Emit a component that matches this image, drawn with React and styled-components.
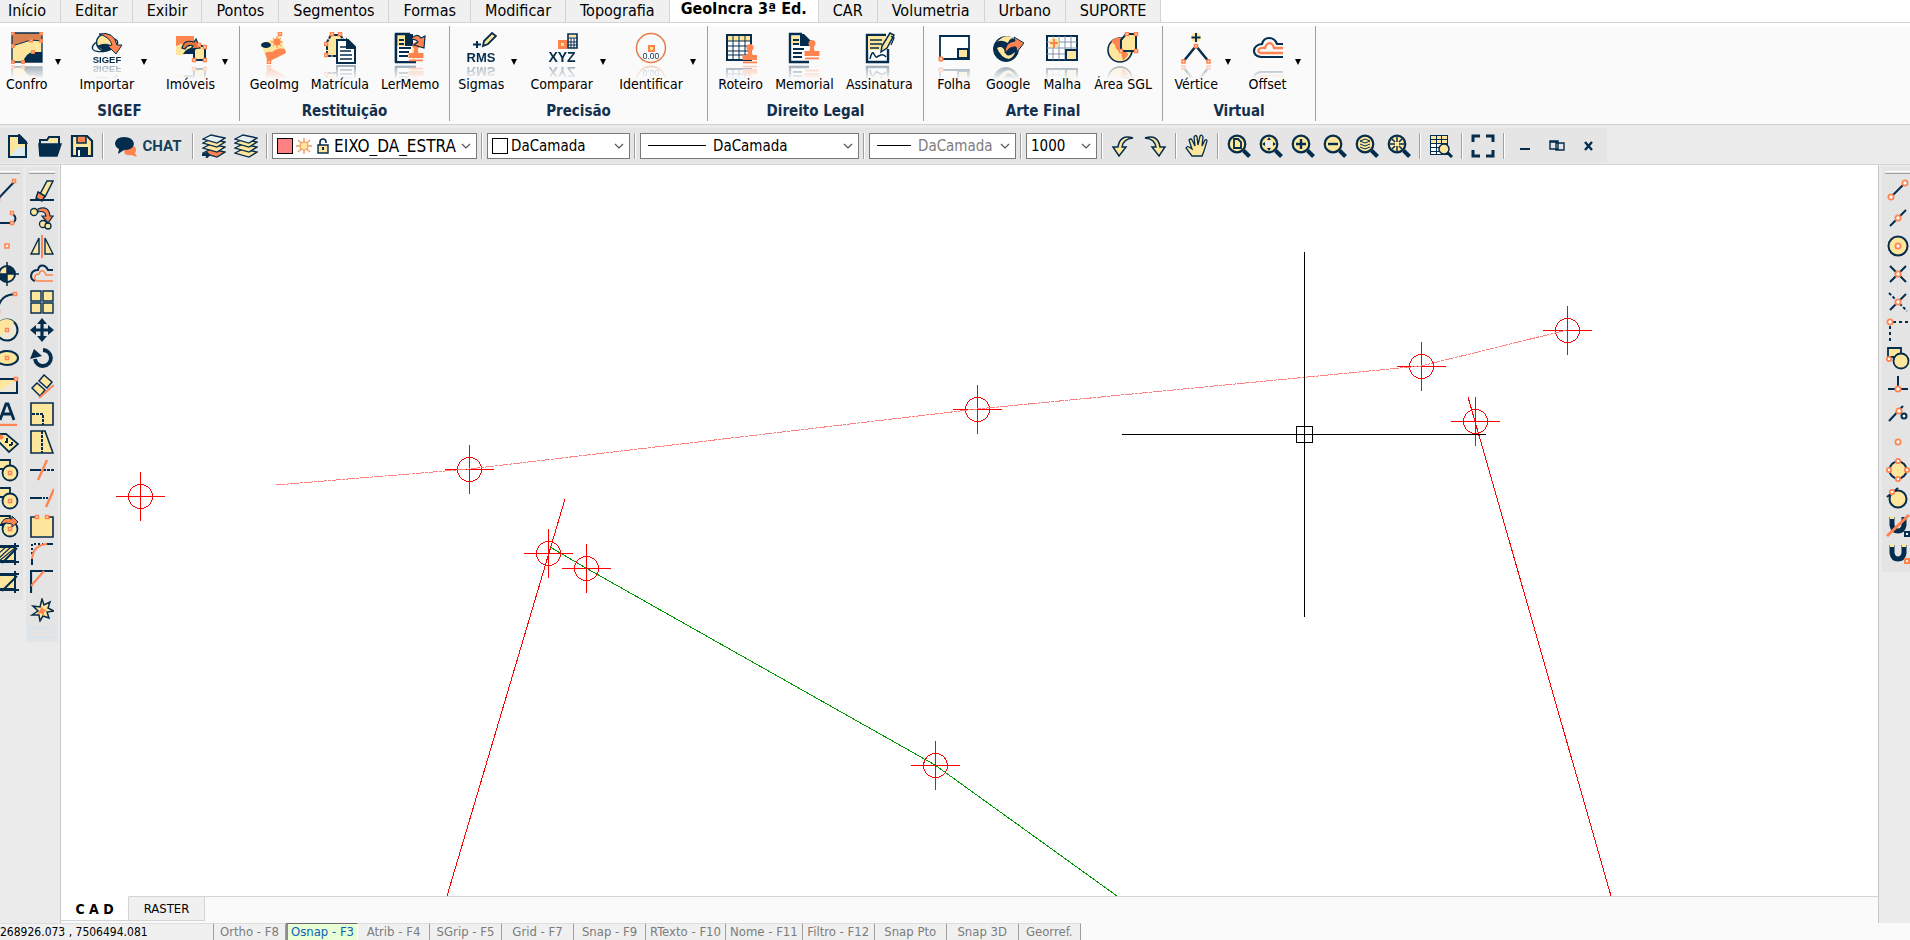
import React from "react";
import styled, { createGlobalStyle, css } from "styled-components";

const NAVY = "#042c4c";
const ORANGE = "#ff8450";
const YELLOW = "#fee79d";
const SANS = '"DejaVu Sans Condensed", "DejaVu Sans", sans-serif';

const GlobalStyle = createGlobalStyle`
  *, *::before { box-sizing: border-box; }
  body { margin: 0; background: #fff; font-family: ${SANS}; color: #000; }
  button, select { font: inherit; color: inherit; margin: 0; }
`;

/* ---------- icon pieces ---------- */

const Svg = styled.svg`
  display: block;
  flex: none;
  width: ${(p) => p.$size}px;
  height: ${(p) => p.$size}px;
  fill: none;
  stroke: ${NAVY};
  stroke-width: 2;
`;

const Sq = ({ x, y, r = 1.5 }) => (
  <rect x={x - r} y={y - r} width={r * 2} height={r * 2} fill="#ffe9d8" stroke={ORANGE} strokeWidth="1.5" />
);
const Dot = ({ x, y, r = 2.6 }) => (
  <circle cx={x} cy={y} r={r} fill="#fff" stroke={ORANGE} strokeWidth="1.8" />
);
const Lens = ({ children }) => (
  <>
    <path d="M16.5 16.5L22.5 22.5" strokeWidth="4" />
    <circle cx="10" cy="10" r="8.3" fill={YELLOW} strokeWidth="2.2" />
    {children}
  </>
);
const Stamp = ({ x, y }) => (
  <g transform={`translate(${x} ${y})`} fill={ORANGE} stroke="none">
    <circle cx="8" cy="3.5" r="3.5" />
    <path d="M6.5 5h3l1 6h5v5h-15v-5h5z" />
    <path d="M1 17.5h14v1.8h-14z" />
  </g>
);
const Caption = ({ x, y, size, weight = 700, children }) => (
  <text x={x} y={y} fontSize={size} fontWeight={weight} fill={NAVY} stroke="none" textAnchor="middle" fontFamily="Liberation Sans, sans-serif">
    {children}
  </text>
);
const Sheets = ({ y, fill }) => <path d={`M1 ${y - 1}l8-4 14 3-8 5z`} fill={fill} strokeWidth="1.3" />;

const RIBBON_ICONS = {
  confro: (
    <>
      <path d="M1 1h30v8L20 8 1 14z" fill="#d9814f" stroke="none" />
      <path d="M1 14L20 8l11 1v11h-9L12 30H1z" fill={YELLOW} stroke="none" />
      <path d="M12 30q3-9 10-10h9v10z" fill={NAVY} stroke="none" />
      <path d="M1 1v29h30V1z" strokeWidth="1.3" />
      <path d="M1 14L20 8l11 1" strokeWidth="1" />
      <Sq x={1.8} y={1.5} r={1.2} /><Sq x={30.2} y={1.5} r={1.2} /><Sq x={1.8} y={14} r={1.2} /><Sq x={20} y={8.5} r={1.2} />
      <Sq x={30.2} y={9} r={1.2} /><Sq x={1.8} y={30} r={1.2} /><Sq x={12} y={30} r={1.2} /><Sq x={22} y={20} r={1.2} />
    </>
  ),
  sigef: (
    <>
      <ellipse cx="14" cy="13" rx="13" ry="6" strokeWidth="1.3" transform="rotate(-15 14 13)" />
      <circle cx="14" cy="10.500" r="8.5" fill={YELLOW} strokeWidth="1.5" />
      <path d="M7 14q8-4 15 1-7 7-15-1z" fill={NAVY} strokeWidth="1" />
      <path d="M8 2q15-3 18 11h5l-6 9-8-8 4-1Q19 5 8 2z" fill={ORANGE} strokeWidth="1" />
      <Caption x={16} y={30.5} size={9.5}>SIGEF</Caption>
    </>
  ),
  imoveis: (
    <>
      <path d="M1 4h18v9q-10-1-18 5z" fill={ORANGE} stroke="none" />
      <path d="M1 14q8-4 16-2v4L9 23H1z" fill={YELLOW} stroke="none" />
      <path d="M8 22q3-6 12-7v7z" fill={NAVY} stroke="none" />
      <path d="M19 28V18l3-4h8v14z" fill={YELLOW} />
      <path d="M7 16q2-9 12-6l2-3 4 9-9 1 2-3q-5-2-8 3z" fill="#e6763c" strokeWidth="1.2" />
      <Sq x={24} y={13} /><Sq x={30} y={15} /><Sq x={30} y={28} /><Sq x={19} y={28} />
    </>
  ),
  geoimg: (
    <>
      <path d="M3 12L22 4l6 17-18 9z" fill={YELLOW} stroke="none" />
      <path d="M7 21q4-2 7-1 6-5 13-3l1 4-18 9z" fill={ORANGE} stroke="none" />
      <ellipse cx="8" cy="13" rx="5" ry="3" fill={NAVY} stroke="none" />
      <circle cx="19" cy="10" r="3.5" fill={ORANGE} stroke="none" />
      <path d="M19 4v12M13 10h12M15 6l8 8M23 6l-8 8" stroke={ORANGE} strokeWidth="1" />
      <Sq x={22} y={2} /><Sq x={11} y={30} />
    </>
  ),
  matricula: (
    <>
      <path d="M3 24V10l4-7h9l4 5v16z" fill={YELLOW} strokeDasharray="5 1" />
      <Sq x={8} y={2} /><Sq x={16} y={2} /><Sq x={2} y={12} /><Sq x={2} y={23} />
      <path d="M13 31V8h11l7 7v16z" fill="#fff" />
      <path d="M23 8v8h8z" fill={NAVY} />
      <path d="M16 15h6M16 19h11M16 23h12M16 27h12" strokeWidth="1.6" />
    </>
  ),
  lermemo: (
    <>
      <path d="M22 30H2V2h14" fill={YELLOW} strokeWidth="2.4" />
      <path d="M2 14h16v15H2z" fill="#fff" stroke="none" />
      <path d="M2 2v28" strokeWidth="2.4" />
      <path d="M11 2h8v12h-8z" fill={NAVY} stroke="none" />
      <path d="M5 8h5M5 12h5M5 16h12M5 20h10M5 24h9" />
      <Stamp x={14} y={10} />
      <path d="M16 8q7-8 11-2l4-2-1 12-10-3 4-3q-3-4-8-2z" fill={ORANGE} strokeWidth="1.2" />
    </>
  ),
  rms: (
    <>
      <path d="M18 14l1-5 8-8 4 3-8 8z" fill={YELLOW} strokeWidth="1.8" />
      <path d="M12 9v7M8 12.500h8" />
      <Caption x={16} y={30} size={13}>RMS</Caption>
    </>
  ),
  xyz: (
    <>
      <path d="M12 8h9v9h-9z" fill={ORANGE} stroke="none" /><path d="M15 11h3v3h-3z" fill={YELLOW} stroke="none" />
      <path d="M22 2h9v14h-9z" fill="#fff" strokeWidth="1.6" /><path d="M22 6h9M22 10h9M22 13h9M25 6v10M28 6v10" strokeWidth="1" />
      <path d="M23 3h7v2h-7z" fill={YELLOW} stroke="none" />
      <Caption x={16} y={30} size={14}>XYZ</Caption>
    </>
  ),
  identificar: (
    <>
      <circle cx="16" cy="16" r="14.500" stroke="#e37d4b" strokeWidth="1.5" />
      <path d="M14 14h5v5h-5z" fill={YELLOW} stroke={ORANGE} />
      <Caption x={16} y={26.5} size={8.5} weight={400}>0.00</Caption>
    </>
  ),
  roteiro: (
    <>
      <path d="M2 3h24v25H2z" fill="#fff" /><path d="M3 4h22v5H3z" fill={YELLOW} stroke="none" />
      <path d="M2 9h24M2 14h24M2 19h24M2 23h24M8 3v25M14 3v25M20 3v25" strokeWidth="1" />
      <Stamp x={17} y={12} />
    </>
  ),
  memorial: (
    <>
      <path d="M21 30H2V2h12" fill="#fff" strokeWidth="2.4" /><path d="M4 4h10v9H4z" fill={YELLOW} stroke="none" />
      <path d="M12 2h4l7 7v5H12z" fill={NAVY} stroke="none" />
      <path d="M5 8h6M5 12h6M5 17h11M5 21h9M5 25h9" />
      <Stamp x={16} y={8} />
    </>
  ),
  assinatura: (
    <>
      <path d="M25 17v13H4V3h19" fill="#fff" strokeWidth="2.4" /><path d="M5 4h17v14H5z" fill={YELLOW} stroke="none" />
      <path d="M7 8h12M7 12h12M7 16h9" strokeWidth="1.7" />
      <path d="M7 27q2-9 4-5t3 3 4-2 5 2" strokeWidth="1.5" />
      <path d="M18 20l1-6 8-13 4 2-7 13z" fill={YELLOW} strokeWidth="1.5" /><path d="M28 4l3 2-3 7" strokeWidth="1.3" />
    </>
  ),
  folha: (
    <>
      <path d="M2 4h29v23H2z" fill="#fff" strokeWidth="1.8" /><path d="M20 17h10v9H20z" fill={YELLOW} />
      <Dot x={3} y={27} r={1.8} />
    </>
  ),
  google: (
    <>
      <circle cx="14" cy="17" r="12.500" fill={NAVY} strokeWidth="1" />
      <path d="M5 10q8-9 16-4-4 1-5 5-7-4-11-1zM5 16q6-3 8 4t10 0q-1 5-6 7-8-1-12-11z" fill={YELLOW} stroke="none" />
      <path d="M13 21q0-11 10-12l-1-4 10 6-7 9-1-5q-6-1-11 6z" fill={ORANGE} strokeWidth="1" />
    </>
  ),
  malha: (
    <>
      <path d="M1 4h30v24H1z" fill="#fff" /><path d="M7 4v24M13 4v24M19 4v24M25 4v24M1 10h30M1 16h30M1 22h30" strokeWidth="1" stroke="#8093a8" />
      <path d="M20 18h11v10H20z" fill={YELLOW} /><circle cx="8" cy="11" r="5" fill={YELLOW} stroke="none" />
      <path d="M8 7v9M4 11h8" stroke={ORANGE} />
    </>
  ),
  area: (
    <>
      <circle cx="13" cy="18" r="12" fill={YELLOW} strokeWidth="1.6" />
      <path d="M4 9q6-6 12-2l3 9-4 3q-6 1-7-6zM14 20q7-1 7 3l-5 6z" fill={ORANGE} stroke="none" />
      <path d="M14 17V8l5-6h10v17H14z" fill={YELLOW} /><Sq x={20} y={2} /><Sq x={29} y={2} /><Sq x={29} y={19} /><Sq x={14} y={19} />
    </>
  ),
  vertice: (
    <>
      <circle cx="16" cy="5.500" r="5" fill={YELLOW} stroke="none" /><path d="M16 1v9M11.500 5.500h9" />
      <path d="M3 30L16 14l13 16" strokeWidth="2.4" /><Sq x={16} y={14} /><Sq x={3.5} y={29.5} /><Sq x={28.5} y={29.5} />
    </>
  ),
  offset: (
    <>
      <path d="M31 12h-6C22 4 12 4 10 12 0 13-1 24 9 25h22" strokeWidth="2.2" />
      <path d="M31 16h-9C20 9 15 10 13 16 5 15 5 21 9 21h22" stroke={ORANGE} strokeWidth="2.4" />
    </>
  ),
};

const Composite = () => (
  <>
    <path d="M2 2h13v9H2z" fill={YELLOW} strokeWidth="1.8" />
    <circle cx="15" cy="15" r="7.500" fill={YELLOW} strokeWidth="1.8" />
  </>
);

const TOOL_ICONS = {
  novo: <><path d="M3 2h11l6 6v15H3z" fill={YELLOW} /><path d="M12 13h7v9H4z" fill="#dceaf2" stroke="none" /><path d="M13 1l7 8h-7z" fill={NAVY} /></>,
  abrir: <><path d="M2 6h7l2-3h10v7" fill={YELLOW} /><path d="M2 5v16" /><path d="M1 10h22l-4 12H2z" fill={NAVY} strokeWidth="1.5" /></>,
  salvar: <><path d="M2 2h15l5 5v15H2z" fill={YELLOW} strokeWidth="2.2" /><path d="M7 2h9v7H7z" fill={ORANGE} strokeWidth="1.5" /><path d="M7 14h10v8H7z" fill={NAVY} /><path d="M9 16v6" stroke="#fff" /></>,
  camadas1: <><Sheets y={20} fill={ORANGE} /><Sheets y={15} fill={YELLOW} /><Sheets y={10} fill={YELLOW} /><Sheets y={6} fill="#e9eef2" /><path d="M0 21h6M4 18l3 3-3 3" /></>,
  camadas2: <><Sheets y={20} fill={YELLOW} /><Sheets y={15} fill={YELLOW} /><Sheets y={10} fill={YELLOW} /><Sheets y={6} fill="#e9eef2" /></>,
  desfazer: <path d="M22 4Q9 0 7 13H2l6 9 7-9h-4Q12 5 22 4z" fill={YELLOW} strokeWidth="1.500" />,
  refazer: <path d="M2 4q13-4 15 9h5l-6 9-7-9h4Q12 5 2 4z" fill={YELLOW} strokeWidth="1.500" />,
  mao: <path d="M7 22L1 14q1-2 3-1l3 2L4 6q2-2 3 0l3 6-1-9q2-3 3 0l1 8 2-9q2-2 3 1l-1 9 3-6q2-1 2 1l-3 10-2 5z" fill={YELLOW} strokeWidth="1.300" />,
  zfolha: <Lens><path d="M7 5h4l3 3v6H7z" strokeWidth="1.800" /></Lens>,
  ztudo: <Lens><path d="M10 3l2 3H8zM10 17l2-3H8zM3 10l3-2v4zM17 10l-3-2v4z" fill={NAVY} stroke="none" /><path d="M7 7h6v6H7z" fill="#e8edf0" stroke="none" /></Lens>,
  zmais: <Lens><path d="M10 5v10M5 10h10" strokeWidth="2.400" /></Lens>,
  zmenos: <Lens><path d="M5 10h10" strokeWidth="2.400" /></Lens>,
  zcamada: <Lens><path d="M5 7l5-2 5 2-5 2zM5 10l5 2 5-2M5 13l5 2 5-2" strokeWidth="1" /></Lens>,
  zcentro: <Lens><path d="M10 3v5M10 12v5M3 10h5M12 10h5M5 5l3 3M12 12l3 3M15 5l-3 3M8 12l-3 3" strokeWidth="1.500" /></Lens>,
  tabela: <><path d="M1 1h18v20H1z" fill="#fff" stroke="none" /><path d="M1 1h18v9H1z" fill={YELLOW} stroke="none" /><path d="M1.500 1v20M18.500 1v20M1 1.500h18M1 5.500h18M1 9.500h18M1 13.500h18M1 17.500h18M1 20.500h18M7.500 1v20M12.500 1v20" strokeWidth="1" /><path d="M18 18l5 5" strokeWidth="3" /><circle cx="15" cy="15" r="5" fill={YELLOW} strokeWidth="1.500" /></>,
  tela: <path d="M2 8V2h7M15 2h7v6M22 16v6h-7M9 22H2v-6" strokeWidth="3" />,
  minimizar: <path d="M7 15h10" strokeWidth="2" />,
  restaurar: <path d="M5 7h8v8H5zM11 9h8v7h-8zM5 8h8" strokeWidth="1.400" />,
  fechar: <path d="M8 8l7 8M15 8l-7 8" strokeWidth="2.400" />,
  linha: <><path d="M1 23L20 3" /><Sq x={19} y={3} /><Sq x={3} y={22} /></>,
  poli: <><path d="M0 17h18q5-4 0-9" /><Sq x={17} y={7} /><Sq x={17} y={17} /></>,
  ponto: <Sq x={12} y={12} r={2} />,
  alvo: <><circle cx="12" cy="12" r="8" fill={YELLOW} /><path d="M12 4a8 8 0 0 1 8 8h-8zM12 20a8 8 0 0 1-8-8h8z" fill={NAVY} stroke="none" /><path d="M12 0v24M0 12h24" strokeWidth="1.500" /></>,
  arco: <><path d="M3 22Q3 5 20 4" /><Sq x={20} y={4} /><Sq x={3} y={22} /></>,
  circulo: <><circle cx="12" cy="12" r="10.500" fill="#eee9d6" /><path d="M4 19L19 4a10 10 0 0 0-15 15z" fill={YELLOW} stroke="none" /><Sq x={12} y={12} /></>,
  elipse: <><ellipse cx="12" cy="12" rx="11" ry="7" fill={YELLOW} /><Sq x={12} y={12} /></>,
  retangulo: <><path d="M1 5h21v14H1z" fill="#eee9d6" /><path d="M2 6h19L2 18z" fill={YELLOW} stroke="none" /><Sq x={21} y={5} /></>,
  texto: <><path d="M5 18l6-16h2l6 16M8 12h9" strokeWidth="2.800" /><path d="M2 23h20" stroke={ORANGE} strokeWidth="2.400" /></>,
  etiqueta: <><path d="M2 4h9l12 10-9 8L2 10z" fill={YELLOW} strokeWidth="1.800" /><circle cx="6" cy="7" r="2.500" fill={ORANGE} stroke="none" /><path d="M12 8v3M10 12h3M14 15h3M17 12v3" /></>,
  bloco: <><Composite /><Sq x={15} y={15} /></>,
  blocoSeta: <><Composite /><Sq x={15} y={15} /><path d="M6 10q3-8 11-5V2l6 6-6 5v-3q-6-2-11 0z" fill={ORANGE} strokeWidth="1" /></>,
  hachura: <><path d="M3 5h17v14H3z" fill={YELLOW} /><path d="M3 12l8-7M3 17L16 5M4 19L20 6" strokeWidth="1.200" /><path d="M0 4h24M0 20h24M20 1v22M7 21L22 6" /></>,
  contorno: <><path d="M3 5h17v14H3z" fill={YELLOW} /><path d="M0 4h24M0 20h24M20 1v22M7 21L22 6" /></>,
  apagar: <><path d="M9 18l8-15h6l-8 16z" fill={YELLOW} strokeWidth="1.500" /><path d="M8 14l7 4-3 5-6-3z" fill={ORANGE} strokeWidth="1.500" /><path d="M0 22h24" /></>,
  copiar: <><circle cx="4" cy="6" r="3.500" fill={YELLOW} strokeWidth="1.300" /><circle cx="13" cy="18" r="3.500" fill={YELLOW} strokeWidth="1.300" /><circle cx="18" cy="20" r="3" fill={YELLOW} strokeWidth="1.300" /><path d="M8 3q11-4 12 7h3l-5 7-6-7h4q-1-6-8-4z" fill={ORANGE} strokeWidth="1.200" /></>,
  espelhar: <><path d="M9 4v16H1zM15 4v16h8z" fill={YELLOW} strokeWidth="1.400" /><path d="M12 1v23" stroke={ORANGE} /></>,
  offset: <><path d="M23 8h-5C15 2 9 2 8 8 0 8-1 17 5 19" /><path d="M23 13h-7C14 7 10 8 9 12 3 12 4 19 7 19h16" stroke={ORANGE} strokeWidth="1.500" /></>,
  matriz: <path d="M1 1h10v10H1zM13 1h10v10H13zM1 13h10v10H1zM13 13h10v10H13z" fill={YELLOW} strokeWidth="1.400" />,
  mover: <><path d="M12 3v18M3 12h18" strokeWidth="3.200" /><path d="M12 0l5 6H7zM12 24l5-6H7zM0 12l6-5v10zM24 12l-6-5v10z" fill={NAVY} stroke="none" /></>,
  girar: <><path d="M5 13a8 8 0 1 0 8-9" strokeWidth="3.800" /><path d="M0 13L4 3l8 7z" fill={NAVY} stroke="none" /></>,
  alinhar: <><path d="M2 14l5-5 8 7-5 6zM9 7l5-6 8 7-5 6z" fill={YELLOW} strokeWidth="1.500" /><path d="M9 24L24 11" stroke={ORANGE} /></>,
  escala: <><path d="M1 1h22v22H1z" fill={YELLOW} strokeWidth="1.600" /><path d="M2 12h11v11" strokeDasharray="3 1" /></>,
  esticar: <><path d="M1 1h14l8 22H1z" fill={YELLOW} strokeWidth="1.600" /><path d="M12 1v22" strokeDasharray="3 1" /></>,
  aparar: <><path d="M0 12h11" /><path d="M13 12h11" strokeDasharray="3 1" /><path d="M8 22L17 2" stroke={ORANGE} strokeWidth="2.400" /></>,
  estender: <><path d="M0 12h10" /><path d="M10 12h8" strokeDasharray="2 1" /><path d="M16 21l8-18" stroke={ORANGE} strokeWidth="2.400" /></>,
  quebrar: <><path d="M6 3H1v20h22V3h-4" fill={YELLOW} strokeWidth="1.600" /><Sq x={7} y={3} /><Sq x={17} y={3} /></>,
  filete: <><path d="M2 23v-7M16 2h7" /><path d="M2 12V2h11" strokeDasharray="2 2" /><path d="M2 17Q3 3 17 2" stroke={ORANGE} /></>,
  chanfro: <><path d="M1 23V1h22" strokeWidth="2.200" /><path d="M1 16L14 1" stroke={ORANGE} /></>,
  explodir: <><path d="M12 1l2 6 6-3-2 6 6 3-7 1 2 6-6-2-3 5-1-6-7 0 6-4-5-5 7 1z" fill={YELLOW} strokeWidth="1.500" /><path d="M12 8l1 3 4 1-3 2v4l-3-3-4 1 3-4z" fill={ORANGE} stroke="none" /></>,
  fim: <><path d="M5 19L19 5" /><Dot x={5} y={19} /><Dot x={19} y={5} /></>,
  meio: <><path d="M4 20L20 4" /><Dot x={12} y={12} /></>,
  centro: <><circle cx="12" cy="12" r="9.500" fill={YELLOW} /><Dot x={12} y={12} /></>,
  inter: <><path d="M4 4l16 16M20 4L4 20" /><Dot x={12} y={12} /></>,
  interAp: <><path d="M20 4L4 20" /><path d="M3 3l18 18" strokeDasharray="3 2" /><Dot x={12} y={12} /></>,
  extensao: <><path d="M7 4h17M4 8v16" strokeDasharray="3 3" /><Dot x={4} y={4} /></>,
  insercao: <><Composite /><Dot x={3} y={13} r={2.2} /></>,
  perp: <><path d="M2 15h20M12 2v12" /><Dot x={12} y={15} /></>,
  proximo: <><path d="M3 19L17 4" /><Dot x={13} y={9} /><circle cx="18" cy="14" r="2.500" fill="#fff" /></>,
  no: <Dot x={12} y={12} />,
  quadrante: <><circle cx="12" cy="12" r="8.500" fill={YELLOW} /><Dot x={12} y={3} r={2.2} /><Dot x={12} y={21} r={2.2} /><Dot x={3} y={12} r={2.2} /><Dot x={21} y={12} r={2.2} /></>,
  tangente: <><circle cx="12" cy="13" r="8.500" fill={YELLOW} /><path d="M1 11L12 2" /><Dot x={6} y={6} r={2.2} /></>,
  imaOff: <><path d="M6 3v8q1 6 6 6t6-6V3" strokeWidth="5" /><path d="M4 2h4v3H4z" fill={YELLOW} stroke="none" /><path d="M1 22L23 1" stroke={ORANGE} strokeWidth="3" /><path d="M19 18h4v4h-4z" fill="#fff" /></>,
  ima: <><path d="M6 3v8q1 6 6 6t6-6V3" strokeWidth="5" /><path d="M4 2h4v3H4zM16 2h4v3h-4z" fill={YELLOW} stroke="none" /><path d="M19 17h4v4h-4z" fill="#fff" stroke={ORANGE} /></>,
};

/* ---------- layout ---------- */

const Page = styled.div`
  display: flex;
  flex-direction: column;
  height: 100vh;
  overflow: hidden;
  background: #ebebeb;
`;

const MenuTabs = styled.nav`
  display: flex;
  flex: none;
  height: 23px;
  background: #fff;
  border-bottom: 1px solid #d4d4d4;
  overflow: hidden;
`;

const MenuTab = styled.button`
  height: 23px;
  padding: 0 14px 1px;
  border: 0;
  border-right: 1px solid #d4d4d4;
  border-bottom: 1px solid #d4d4d4;
  background: #f0f0f0;
  font-size: 16px;
  line-height: 18px;
  white-space: nowrap;
  &:first-child { padding-left: 8px; }
  ${(p) => p.$active && css`
    padding: 0 11px 4px;
    background: #fff;
    border-bottom-color: #fff;
    font-weight: 700;
  `}
`;

const Ribbon = styled.div`
  display: flex;
  flex: none;
  height: 101px;
  padding: 3px 0 2px;
  background: linear-gradient(#fff 3px, #fafafa 3px);
`;

const Group = styled.section`
  display: flex;
  flex-direction: column;
  flex: none;
  width: ${(p) => p.$width}px;
  height: 95px;
  border-right: 1px solid #a0a0a0;
`;

const GroupItems = styled.div`
  display: flex;
  justify-content: space-evenly;
  height: 75px;
  ${(p) => p.$flush && css`
    justify-content: space-between;
    padding: 0 6px 0 4px;
  `}
`;

const GroupTitle = styled.h2`
  margin: 0;
  color: #14304f;
  font-size: 15px;
  line-height: 20px;
  text-align: center;
`;

const Item = styled.div`
  display: flex;
`;

const RibbonButton = styled.button`
  display: flex;
  flex-direction: column;
  align-items: center;
  gap: 11px;
  min-width: 44px;
  padding: 6px 2px 0;
  border: 0;
  background: none;
  font-size: 14px;
  line-height: 18px;
  white-space: nowrap;
  svg { -webkit-box-reflect: below 1px linear-gradient(transparent 55%, rgba(0, 0, 0, 0.4)); }
`;

const DropButton = styled.button`
  width: 16px;
  padding: 0 0 4px;
  border: 0;
  background: none;
  &::before {
    content: "";
    display: block;
    margin: 0 auto;
    width: 0;
    border: 3px solid transparent;
    border-top: 6px solid #000;
    border-bottom: 0;
  }
`;

const ToolbarStrip = styled.div`
  display: flex;
  flex: none;
  height: 41px;
  padding: 3px 0 0;
  border-top: 1px solid #d0d0d0;
  border-bottom: 1px solid #d4d4d4;
  background: #ebebeb;
`;

const Toolbar = styled.div`
  display: flex;
  align-items: center;
  height: 35px;
  padding: 0 2px;
  background: #e5e5e5;
`;

const ToolButton = styled.button`
  display: flex;
  align-items: center;
  justify-content: center;
  flex: none;
  width: 32px;
  height: 28px;
  padding: 0;
  border: 0;
  background: none;
`;

const ChatButton = styled(ToolButton)`
  width: 80px;
  gap: 4px;
  color: #14405c;
  font: 700 15px/18px Roboto, sans-serif;
`;

const Separator = styled.span`
  flex: none;
  width: 2px;
  height: 26px;
  margin: 0 4px;
  border-left: 1px solid #a0a0a0;
  border-right: 1px solid #fff;
`;

const Combo = styled.label`
  display: flex;
  align-items: center;
  flex: none;
  width: ${(p) => p.$width}px;
  height: 26px;
  padding: 0 4px;
  gap: 3px;
  border: 1px solid #7a7a7a;
  background: #fff;
`;

const Select = styled.select`
  appearance: none;
  flex: 1;
  min-width: 0;
  height: 24px;
  padding: 0;
  border: 0;
  outline: 0;
  background: transparent;
  color: ${(p) => (p.$muted ? "#7d7d7d" : "#000")};
  font-size: ${(p) => (p.$large ? 17 : 15)}px;
`;

const Swatch = styled.span`
  flex: none;
  width: 16px;
  height: 16px;
  border: 1px solid #000;
  background: ${(p) => p.$color};
`;

const LineSample = styled.span`
  flex: none;
  width: ${(p) => p.$width}px;
  margin: 0 4px 0 3px;
  border-top: 1px solid #000;
`;

const Work = styled.div`
  display: flex;
  flex: 1;
  min-height: 0;
`;

const LeftDock = styled.aside`
  display: flex;
  align-items: flex-start;
  flex: none;
  gap: 3px;
  width: 61px;
  padding-top: 2px;
  overflow: hidden;
  border-right: 1px solid #c8c8c8;
`;

const RightDock = styled(LeftDock)`
  width: 32px;
  padding-left: 3px;
  border-right: 0;
  border-left: 1px solid #c8c8c8;
`;

const Palette = styled.div`
  display: flex;
  flex-direction: column;
  flex: none;
  width: 32px;
  padding-bottom: 4px;
  background: #e4e4e4;
  ${(p) => p.$cut && css`margin-left: -9px;`}
  &::before {
    content: "";
    height: 3px;
    margin: 4px 3px 2px;
    border-top: 1px solid #fff;
    border-bottom: 1px solid #a0a0a0;
  }
`;

const DropSlot = styled.span`
  height: 10px;
  margin: 4px 2px 0;
  border: 1px solid #cfe4f5;
`;

const Center = styled.main`
  display: flex;
  flex-direction: column;
  flex: 1;
  min-width: 0;
`;

const Canvas = styled.div`
  flex: 1;
  min-height: 0;
  background: #fff;
  overflow: hidden;
`;

const Drawing = styled.svg`
  display: block;
  width: 100%;
  height: 100%;
  fill: none;
  shape-rendering: crispEdges;
`;

const SheetTabs = styled.div`
  display: flex;
  flex: none;
  height: 27px;
  padding-bottom: 2px;
  background: #fafafa;
`;

const SheetTab = styled.button`
  width: ${(p) => (p.$active ? 68 : 76)}px;
  padding: 0;
  border: 0;
  border-right: 1px solid #d4d4d4;
  border-top: 1px solid ${(p) => (p.$active ? "#fff" : "#d4d4d4")};
  background: ${(p) => (p.$active ? "#fff" : "#f0f0f0")};
  border-bottom: 1px solid #d4d4d4;
  font-size: ${(p) => (p.$active ? 14 : 13)}px;
  line-height: 18px;
  font-weight: ${(p) => (p.$active ? 700 : 400)};
`;

const SheetRest = styled.div`
  flex: 1;
  border-top: 1px solid #d4d4d4;
`;

const StatusBar = styled.footer`
  display: flex;
  flex: none;
  height: 17px;
  background: #fafafa;
  font-size: 12px;
  line-height: 16px;
`;

const Coordinates = styled.output`
  width: 214px;
  flex: none;
  background: #f0f0f0;
  border-right: 1px solid #a0a0a0;
  border-top: 1px solid #dedede;
  white-space: pre;
`;

const StatusToggle = styled.button`
  flex: none;
  min-width: 72px;
  padding: 0 4px;
  border: 0;
  border-right: 1px solid #a0a0a0;
  border-top: 1px solid #dedede;
  background: #f0f0f0;
  color: #7c7c7c;
  font-size: 13px;
  line-height: 16px;
  white-space: nowrap;
  &:last-child { min-width: 62px; }
  ${(p) => p.$on && css`
    background: #e8ffd5;
    color: #0b62bd;
    border-top: 1px solid #696969;
    border-left: 2px solid #8c8c8c;
    border-right-color: #fff;
    padding: 0 1px;
  `}
`;

/* ---------- data ---------- */

const TABS = ["Início", "Editar", "Exibir", "Pontos", "Segmentos", "Formas", "Modificar", "Topografia", "GeoIncra 3ª Ed.", "CAR", "Volumetria", "Urbano", "SUPORTE"];

const GROUPS = [
  { title: "SIGEF", width: 240, flush: true, items: [["Confro", "confro", true], ["Importar", "sigef", true], ["Imóveis", "imoveis", true]] },
  { title: "Restituição", width: 210, items: [["GeoImg", "geoimg"], ["Matrícula", "matricula"], ["LerMemo", "lermemo"]] },
  { title: "Precisão", width: 258, items: [["Sigmas", "rms", true], ["Comparar", "xyz", true], ["Identificar", "identificar", true]] },
  { title: "Direito Legal", width: 216, items: [["Roteiro", "roteiro"], ["Memorial", "memorial"], ["Assinatura", "assinatura"]] },
  { title: "Arte Final", width: 239, items: [["Folha", "folha"], ["Google", "google"], ["Malha", "malha"], ["Área SGL", "area"]] },
  { title: "Virtual", width: 153, items: [["Vértice", "vertice", true], ["Offset", "offset", true]] },
];

const DRAW_TOOLS = ["linha", "poli", "ponto", "alvo", "arco", "circulo", "elipse", "retangulo", "texto", "etiqueta", "bloco", "bloco", "blocoSeta", "hachura", "contorno"];
const EDIT_TOOLS = ["apagar", "copiar", "espelhar", "offset", "matriz", "mover", "girar", "alinhar", "escala", "esticar", "aparar", "estender", "quebrar", "filete", "chanfro", "explodir"];
const SNAP_TOOLS = ["fim", "meio", "centro", "inter", "interAp", "extensao", "insercao", "perp", "proximo", "no", "quadrante", "tangente", "imaOff", "ima"];
const STATUS = ["Ortho - F8", "Osnap - F3", "Atrib - F4", "SGrip - F5", "Grid - F7", "Snap - F9", "RTexto - F10", "Nome - F11", "Filtro - F12", "Snap Pto", "Snap 3D", "Georref."];

const POINTS = [[79, 331], [408, 304], [487, 388], [525, 403], [874, 600], [916, 244], [1360, 201], [1414, 256], [1506, 165]];

/* ---------- components ---------- */

const Tool = ({ icon }) => (
  <ToolButton aria-label={icon}>
    <Svg $size={24} viewBox="0 0 24 24">{TOOL_ICONS[icon]}</Svg>
  </ToolButton>
);

const Chevron = () => (
  <Svg $size={12} viewBox="0 0 12 12"><path d="M2 4l4 4 4-4" stroke="#555" strokeWidth="1.2" /></Svg>
);

const ComboBox = ({ width, label, options, lead, ...rest }) => (
  <Combo $width={width}>
    {lead}
    <Select aria-label={label} {...rest}>
      {options.map((o) => <option key={o}>{o}</option>)}
    </Select>
    <Chevron />
  </Combo>
);

const ToolPalette = ({ tools, cut, children }) => (
  <Palette $cut={cut}>
    {tools.map((t, i) => <Tool key={i} icon={t} />)}
    {children}
  </Palette>
);

const Marker = ({ x, y }) => (
  <g stroke="#f00">
    <circle cx={x + 0.5} cy={y + 0.5} r="12" />
    <path d={`M${x - 24} ${y + 0.5}h49M${x + 0.5} ${y - 24}v49`} />
  </g>
);

const CadDrawing = () => (
  <Drawing role="img" aria-label="Desenho">
    <path d="M504 334L386 731M1407 232L1550 731" stroke="#f00" />
    <path d="M489 382L525 403 874 600 1056 731" stroke="#009600" />
    {POINTS.map(([x, y]) => <Marker key={x} x={x} y={y} />)}
    <path d="M215 320L408 304 916 244 1360 201 1506 165" stroke="#ff8080" strokeDasharray="9 1 3 1" />
    <path d="M1061 269.5h364M1243.5 87v365M1235.500 261.500h16v16h-16z" stroke="#000" />
  </Drawing>
);

export default function App() {
  return (
    <Page>
      <GlobalStyle />
      <MenuTabs>
        {TABS.map((t) => <MenuTab key={t} $active={t.startsWith("GeoIncra")}>{t}</MenuTab>)}
      </MenuTabs>
      <Ribbon>
        {GROUPS.map((g) => (
          <Group key={g.title} $width={g.width}>
            <GroupItems $flush={g.flush}>
              {g.items.map(([label, icon, drop]) => (
                <Item key={label}>
                  <RibbonButton>
                    <Svg $size={32} viewBox="0 0 32 32">{RIBBON_ICONS[icon]}</Svg>
                    {label}
                  </RibbonButton>
                  {drop && <DropButton aria-label={`Mais opções de ${label}`} />}
                </Item>
              ))}
            </GroupItems>
            <GroupTitle>{g.title}</GroupTitle>
          </Group>
        ))}
      </Ribbon>
      <ToolbarStrip>
        <Toolbar>
          <Tool icon="novo" /><Tool icon="abrir" /><Tool icon="salvar" />
          <Separator />
          <ChatButton>
            <Svg $size={24} viewBox="0 0 24 24">
              <path d="M14 11q9 0 8 6-1 2-1 2l2 4-6-2q-7 1-7-4z" fill={ORANGE} stroke="none" />
              <path d="M10 3q9 0 10 7-1 6-10 6l-6 4 1-5q-4-2-4-6 1-6 9-6z" fill={NAVY} stroke="none" />
            </Svg>
            CHAT
          </ChatButton>
          <Separator />
          <Tool icon="camadas1" /><Tool icon="camadas2" />
          <Separator />
          <ComboBox
            width={205}
            label="Camada"
            options={["EIXO_DA_ESTRADA"]}
            $large
            lead={
              <>
                <Swatch $color="#ff8080" />
                <Svg $size={16} viewBox="0 0 16 16">
                  <path d="M8 0v16M0 8h16M2 2l12 12M14 2L2 14" stroke="#f29a5e" strokeWidth="1.4" />
                  <circle cx="8" cy="8" r="4" fill={YELLOW} stroke="#f29a5e" strokeWidth="1.2" />
                </Svg>
                <Svg $size={16} viewBox="0 0 16 16">
                  <path d="M5 7V4q0-3 3-3t3 3v1" strokeWidth="1.6" />
                  <path d="M3 7h10v8H3z" fill={YELLOW} strokeWidth="1.4" />
                  <path d="M8 9v3" />
                </Svg>
              </>
            }
          />
          <Separator />
          <ComboBox width={143} label="Cor" options={["DaCamada"]} lead={<Swatch $color="#fff" />} />
          <Separator />
          <ComboBox width={219} label="Tipo de linha" options={["DaCamada"]} lead={<LineSample $width={58} />} />
          <Separator />
          <ComboBox width={147} label="Espessura" options={["DaCamada"]} lead={<LineSample $width={34} />} $muted />
          <Separator />
          <ComboBox width={71} label="Escala" options={["1000"]} />
          <Separator />
          <Tool icon="desfazer" /><Tool icon="refazer" />
          <Separator />
          <Tool icon="mao" />
          <Separator />
          {["zfolha", "ztudo", "zmais", "zmenos", "zcamada", "zcentro"].map((z) => <Tool key={z} icon={z} />)}
          <Separator />
          <Tool icon="tabela" />
          <Separator />
          <Tool icon="tela" />
          <Separator />
          <Tool icon="minimizar" /><Tool icon="restaurar" /><Tool icon="fechar" />
        </Toolbar>
      </ToolbarStrip>
      <Work>
        <LeftDock>
          <ToolPalette tools={DRAW_TOOLS} cut />
          <ToolPalette tools={EDIT_TOOLS}><DropSlot /></ToolPalette>
        </LeftDock>
        <Center>
          <Canvas><CadDrawing /></Canvas>
          <SheetTabs>
            <SheetTab $active>C A D</SheetTab>
            <SheetTab>RASTER</SheetTab>
            <SheetRest />
          </SheetTabs>
        </Center>
        <RightDock><ToolPalette tools={SNAP_TOOLS} /></RightDock>
      </Work>
      <StatusBar>
        <Coordinates>268926.073 , 7506494.081</Coordinates>
        {STATUS.map((s) => <StatusToggle key={s} $on={s.startsWith("Osnap")}>{s}</StatusToggle>)}
      </StatusBar>
    </Page>
  );
}
